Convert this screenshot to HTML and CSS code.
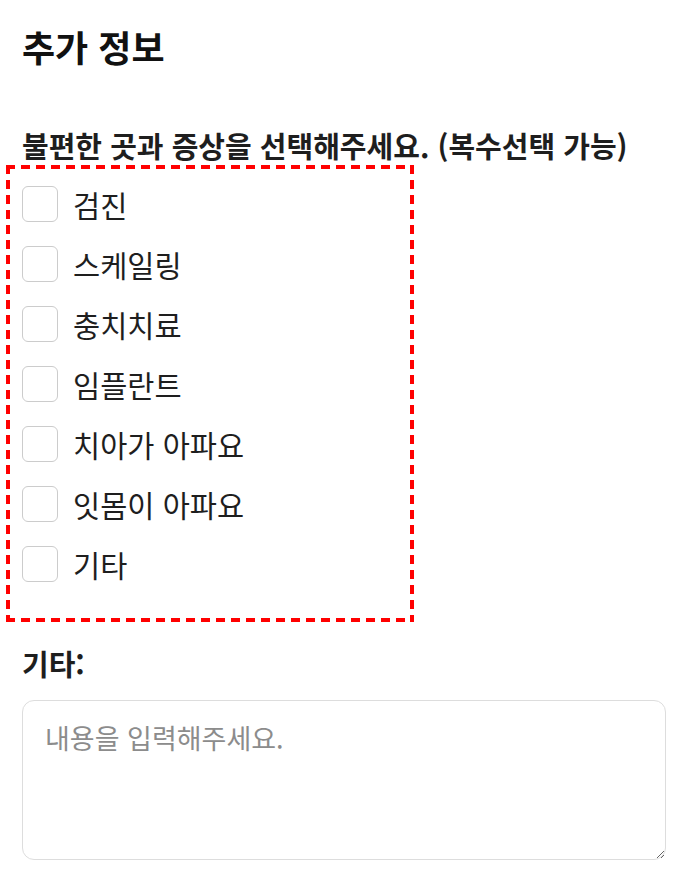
FILE: index.html
```html
<!DOCTYPE html>
<html lang="ko">
<head>
    <meta charset="UTF-8">
    <meta name="viewport" content="width=device-width, initial-scale=1.0">
    <title>추가 정보</title>
    <link rel="stylesheet" href="styles.css">
</head>
<body>
    <div class="page">
        <h2>추가 정보</h2>

        <p class="question">불편한 곳과 증상을 선택해주세요. (복수선택 가능)</p>
        <div class="options">
            <label class="option"><input type="checkbox" name="symptom" value="검진"><span>검진</span></label>
            <label class="option"><input type="checkbox" name="symptom" value="스케일링"><span>스케일링</span></label>
            <label class="option"><input type="checkbox" name="symptom" value="충치치료"><span>충치치료</span></label>
            <label class="option"><input type="checkbox" name="symptom" value="임플란트"><span>임플란트</span></label>
            <label class="option"><input type="checkbox" name="symptom" value="치아가 아파요"><span>치아가 아파요</span></label>
            <label class="option"><input type="checkbox" name="symptom" value="잇몸이 아파요"><span>잇몸이 아파요</span></label>
            <label class="option"><input type="checkbox" name="symptom" value="기타"><span>기타</span></label>
        </div>

        <label class="question" for="etc">기타:</label>
        <textarea id="etc" placeholder="내용을 입력해주세요."></textarea>
    </div>
</body>
</html>
```

FILE: styles.css
```css
body {
    margin: 0;
    font-family: "Noto Sans CJK KR", "Noto Sans", sans-serif;
    color: #1e1e1e;
    background: #fff;
}
.page {
    padding: 21px 26px 30px 22px;
}
h2 {
    margin: 0 0 54px;
    font-size: 36px;
    line-height: 50px;
    font-weight: 700;
    color: #111;
}
.question {
    display: block;
    margin: 0;
    font-size: 29px;
    line-height: 40px;
    font-weight: 700;
}

/* short red dashes round the option group (9px dash, 6px gap) */
.options {
    --dash-x: repeating-linear-gradient(90deg, red 0 9px, transparent 9px 15px);
    --dash-y: repeating-linear-gradient(180deg, red 0 9px, transparent 9px 15px);
    width: 408px;
    box-sizing: border-box;
    margin: 0 0 21px -16px;
    padding: 9px 16px 28px;
    background:
        var(--dash-x) left top / 100% 4px no-repeat,
        var(--dash-x) left bottom / 100% 4px no-repeat,
        var(--dash-y) left top / 4px 100% no-repeat,
        var(--dash-y) right top / 4px 100% no-repeat;
}
.option {
    display: flex;
    align-items: center;
    gap: 15px;
    height: 60px;
    font-size: 29.5px;
}
.option input {
    appearance: none;
    margin: 0;
    width: 36px;
    height: 36px;
    border: 1px solid #ccc;
    border-radius: 6px;
    background: #fff;
    cursor: pointer;
}
.option input:checked {
    background: #4a90e2;
    border-color: #4a90e2;
}
textarea {
    display: block;
    box-sizing: border-box;
    width: 100%;
    height: 160px;
    margin-top: 17px;
    padding: 17px 22px;
    border: 1px solid #ddd;
    border-radius: 12px;
    font-family: inherit;
    font-size: 27px;
    color: #222;
}
textarea::placeholder {
    color: #8c8c8c;
}
```
